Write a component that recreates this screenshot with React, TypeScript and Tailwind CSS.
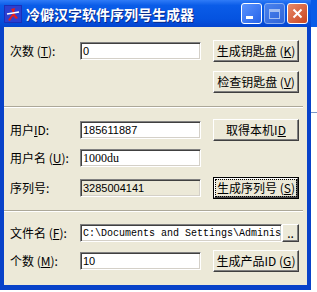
import React from 'react';

const cjk = "font-['SimSun','Noto_Sans_CJK_SC',sans-serif]";

const Label: React.FC<{ children: React.ReactNode }> = ({ children }) => (
  <div className={`w-[70px] shrink-0 text-[12px] leading-none text-black whitespace-pre ${cjk}`}>{children}</div>
);

const Field: React.FC<{ value: string; width?: string; font?: string; disabled?: boolean }> = ({
  value,
  width = 'w-[121px]',
  font = "font-['Liberation_Sans',sans-serif] text-[11px]",
  disabled,
}) => (
  <div
    className={`${width} h-[18px] flex items-center px-[2px] border border-t-[#808080] border-l-[#808080] border-b-white border-r-white shadow-[inset_1px_1px_0_#404040,inset_-1px_-1px_0_#d4d0c8] ${
      disabled ? 'bg-[#ece9d8]' : 'bg-white'
    } ${font} text-black overflow-hidden whitespace-nowrap`}
  >
    {value}
  </div>
);

const Btn: React.FC<{ children: React.ReactNode; focused?: boolean; className?: string }> = ({
  children,
  focused,
  className = 'w-[86px] h-[22px] ml-[12px]',
}) => (
  <div className={`${className} ${focused ? 'border border-black' : ''} shrink-0`}>
    <div className="w-full h-full bg-[#ece9d8] border border-t-white border-l-white border-r-[#404040] border-b-[#404040] shadow-[inset_-1px_-1px_0_#808080] flex items-center justify-center">
      <div
        className={`text-[12px] leading-none text-black ${cjk} ${
          focused ? 'outline outline-1 outline-dotted outline-black px-[1px] py-[2px]' : ''
        } whitespace-pre`}
      >
        {children}
      </div>
    </div>
  </div>
);

const Sep = () => (
  <div className="w-[299px] h-[2px] border-t border-t-[#aca899] border-b border-b-white" />
);

export default function App() {
  return (
    <div className="w-[317px] h-[292px] bg-white overflow-hidden flex">
      <div className="w-[311px] h-[290px] flex flex-col shrink-0">
        {/* title bar */}
        <div className="h-[27px] flex items-center bg-[linear-gradient(#2f7bf7,#0a5ce8_20%,#0553e0_70%,#0444cf)] pl-[4px] pr-[3px]">
          <svg width="18" height="18" viewBox="0 0 18 18" className="shrink-0">
            <rect width="18" height="18" fill="#1b2fb8" />
            <rect x="1" y="1" width="16" height="16" fill="#2c3fd0" />
            <path d="M4 15 L9 8 L7 4 L11 3 L10 8 L14 13 L12 14 L9 11 L6 16 Z" fill="#e02020" />
            <path d="M3 9 L15 7" stroke="#fff" strokeWidth="1.5" />
          </svg>
          <div
            className={`ml-[4px] text-[14px] font-bold text-white leading-none [text-shadow:1px_1px_0_#0b2a8a] ${cjk}`}
          >
            冷僻汉字软件序列号生成器
          </div>
          <div className="ml-auto flex gap-[2px]">
            <div className="w-[21px] h-[21px] rounded-[3px] border border-white bg-[linear-gradient(135deg,#5a93ff,#2663e8)] flex items-end justify-start p-[4px]">
              <div className="w-[7px] h-[3px] bg-white" />
            </div>
            <div className="w-[21px] h-[21px] rounded-[3px] border border-[#a8c4f5] bg-[linear-gradient(135deg,#5a8cf0,#3a6ad8)] flex items-center justify-center opacity-80">
              <div className="w-[11px] h-[10px] border border-[#c9d8f5] border-t-[3px]" />
            </div>
            <div className="w-[21px] h-[21px] rounded-[3px] border border-white bg-[linear-gradient(135deg,#e88a6a,#c94520)] flex items-center justify-center">
              <svg width="11" height="11" viewBox="0 0 11 11">
                <path d="M1.5 1.5 L9.5 9.5 M9.5 1.5 L1.5 9.5" stroke="#fff" strokeWidth="2" />
              </svg>
            </div>
          </div>
        </div>
        {/* body */}
        <div className="flex-1 border-l-4 border-r-4 border-b-[5px] border-[#0842c9] bg-[#ece9d8] pl-[6px] flex flex-col">
          <div className="mt-[13px] h-[22px] flex items-center">
            <Label>次数 (<u>T</u>):</Label>
            <Field value="0" />
            <Btn>生成钥匙盘 (<u>K</u>)</Btn>
          </div>
          <div className="mt-[9px] h-[22px] flex items-center">
            <div className="w-[191px]" />
            <Btn>检查钥匙盘 (<u>V</u>)</Btn>
          </div>
          <div className="mt-[13px] -ml-[6px]">
            <Sep />
          </div>
          <div className="mt-[11px] h-[22px] flex items-center">
            <Label>
              用户<u>I</u>D:
            </Label>
            <Field value="185611887" />
            <Btn>
              取得本机I<u>D</u>
            </Btn>
          </div>
          <div className="mt-[6px] h-[22px] flex items-center">
            <Label>用户名 (<u>U</u>):</Label>
            <Field value="1000du" font="font-['Liberation_Serif',serif] text-[12px]" />
          </div>
          <div className="mt-[8px] h-[22px] flex items-center">
            <Label>序列号:</Label>
            <Field value="3285004141" disabled />
            <Btn focused>生成序列号 (<u>S</u>)</Btn>
          </div>
          <div className="mt-[11px] -ml-[6px]">
            <Sep />
          </div>
          <div className="mt-[10px] h-[22px] flex items-center">
            <Label>文件名 (<u>F</u>):</Label>
            <Field
              value="C:\Documents and Settings\Adminis"
              width="w-[202px]"
              font="font-['Liberation_Mono',monospace] text-[10px]"
            />
            <Btn className="w-[17px] h-[18px]">..</Btn>
          </div>
          <div className="mt-[6px] h-[22px] flex items-center">
            <Label>个数 (<u>M</u>):</Label>
            <Field value="10" />
            <Btn>生成产品ID (<u>G</u>)</Btn>
          </div>
        </div>
      </div>
      <div className="flex-1 h-full bg-white flex flex-col">
        <div className="h-[27px] bg-[#0a5ce8]" />
        <div className="mt-[85px] h-[1px] bg-[#7a96c8]" />
      </div>
    </div>
  );
}
